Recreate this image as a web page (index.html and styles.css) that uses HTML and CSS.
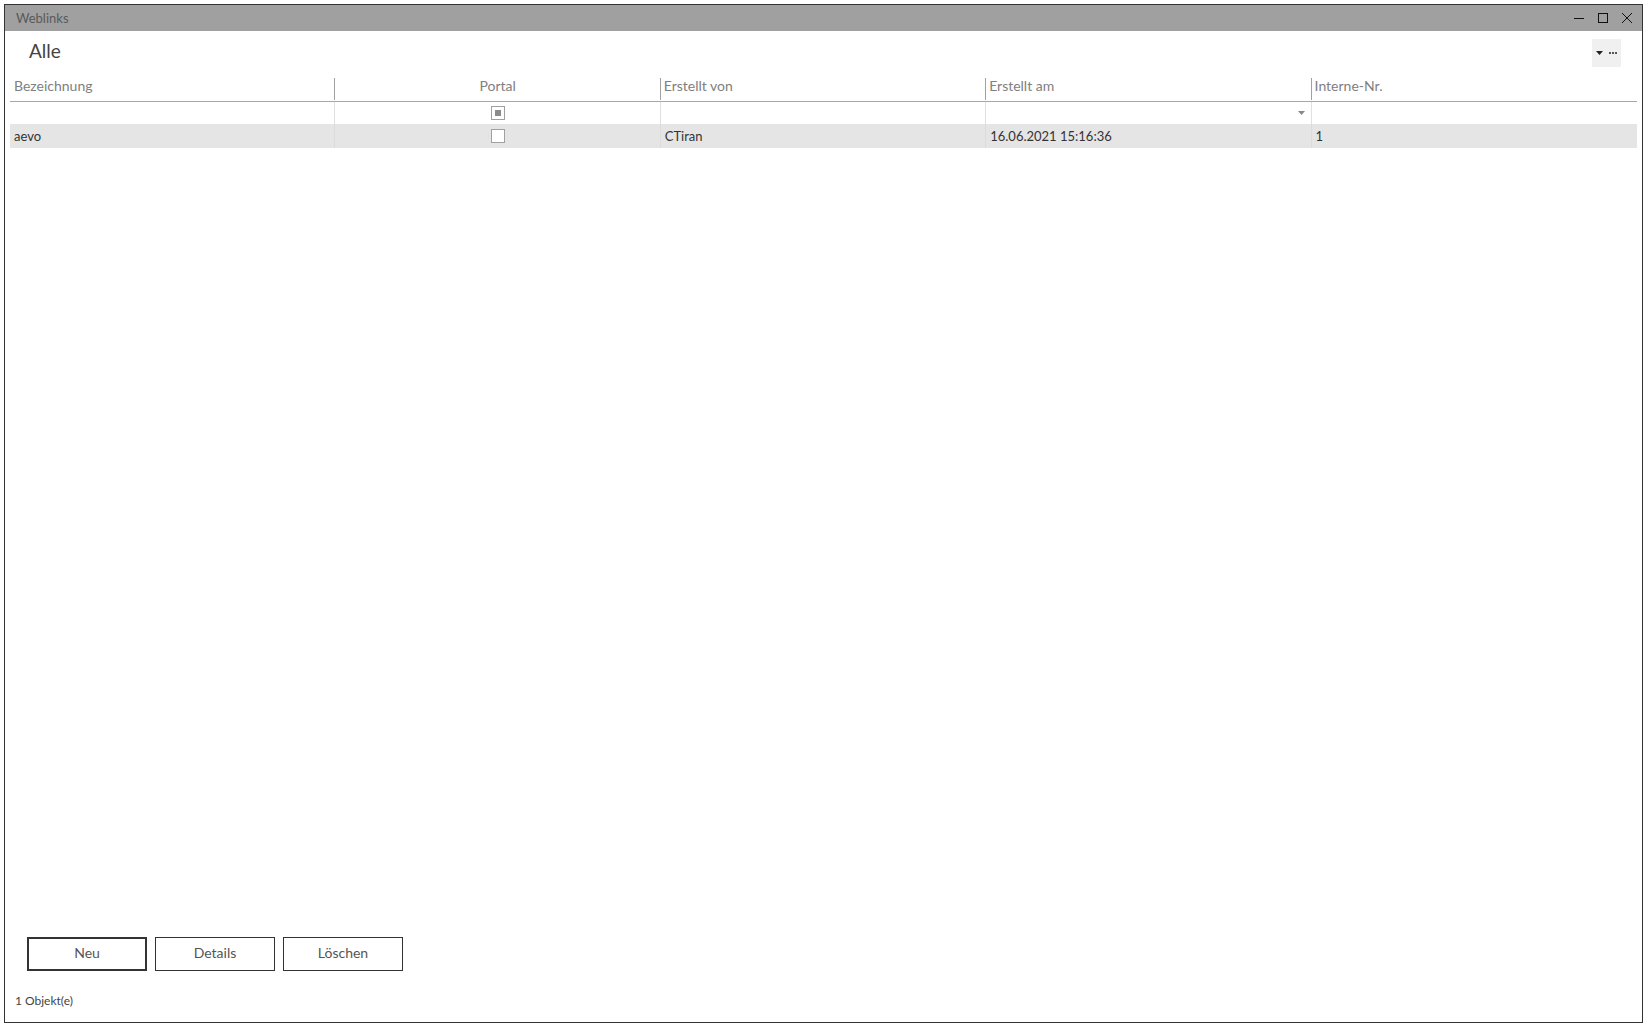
FILE: index.html
```html
<!DOCTYPE html>
<html lang="de">
<head>
<meta charset="utf-8">
<title>Weblinks</title>
<link rel="stylesheet" href="styles.css">
</head>
<body>
<div class="window">
  <div class="titlebar">
    <span class="title">Weblinks</span>
    <div class="controls">
      <svg class="ctl" width="10" height="10" viewBox="0 0 10 10"><path d="M0 5.5h10" stroke="#111" stroke-width="1"/></svg>
      <svg class="ctl" width="10" height="10" viewBox="0 0 10 10"><rect x="0.5" y="0.5" width="9" height="9" fill="none" stroke="#111" stroke-width="1"/></svg>
      <svg class="ctl" width="10" height="10" viewBox="0 0 10 10"><path d="M0 0L10 10M10 0L0 10" stroke="#111" stroke-width="1"/></svg>
    </div>
  </div>
  <div class="viewbar">
    <span class="viewname">Alle</span>
    <div class="viewtools">
      <svg width="7" height="4" viewBox="0 0 7 4"><path d="M0 0h7L3.5 4z" fill="#222"/></svg>
      <svg width="8" height="2" viewBox="0 0 8 2"><rect x="0" y="0" width="2" height="2" fill="#555"/><rect x="3" y="0" width="2" height="2" fill="#555"/><rect x="6" y="0" width="2" height="2" fill="#555"/></svg>
    </div>
  </div>
  <div class="grid">
    <div class="row head">
      <div class="cell sep">Bezeichnung</div>
      <div class="cell sep center">Portal</div>
      <div class="cell sep">Erstellt von</div>
      <div class="cell sep">Erstellt am</div>
      <div class="cell">Interne-Nr.</div>
    </div>
    <div class="row filter">
      <div class="cell sep"></div>
      <div class="cell sep center"><span class="cb ind"></span></div>
      <div class="cell sep"></div>
      <div class="cell sep right"><svg width="7" height="4" viewBox="0 0 7 4"><path d="M0 0h7L3.5 4z" fill="#888"/></svg></div>
      <div class="cell"></div>
    </div>
    <div class="row data">
      <div class="cell sep">aevo</div>
      <div class="cell sep center"><span class="cb"></span></div>
      <div class="cell sep">CTiran</div>
      <div class="cell sep">16.06.2021 15:16:36</div>
      <div class="cell">1</div>
    </div>
  </div>
  <div class="buttons">
    <button class="btn focus">Neu</button>
    <button class="btn">Details</button>
    <button class="btn">Löschen</button>
  </div>
  <div class="status">1 Objekt(e)</div>
</div>
</body>
</html>
```

FILE: styles.css
```css
* { box-sizing: border-box; }
html, body { margin: 0; padding: 0; background: #fff; }
body {
  font-family: Lato, "Noto Sans", sans-serif;
  color: #333;
  padding: 4px;
  height: 1027px;
}
.window {
  height: 1019px;
  width: 1639px;
  border: 1px solid #333;
  display: flex;
  flex-direction: column;
  background: #fff;
}
.titlebar {
  height: 26px;
  background: #a0a0a0;
  display: flex;
  align-items: center;
  padding-left: 11px;
  padding-right: 10px;
}
.title { font-size: 13px; color: #5a5a5a; flex: 1; margin-top: -1px; }
.controls { display: flex; gap: 14px; align-items: center; margin-top: -1px; }
.ctl { display: block; }
.viewbar {
  height: 41px;
  display: flex;
  align-items: center;
  justify-content: space-between;
  padding-left: 24px;
  padding-right: 21px;
}
.viewname { font-size: 19px; color: #444; margin-top: -2px; }
.viewtools {
  width: 29px;
  height: 28px;
  background: #f0f0f0;
  display: flex;
  align-items: center;
  justify-content: center;
  gap: 6px;
  margin-top: 2px;
}
.viewtools svg { display: block; }
.grid { flex: 1; padding: 0 5px; }
.row { display: grid; grid-template-columns: repeat(5, 1fr); }
.cell {
  display: flex;
  align-items: center;
  padding-left: 3px;
  white-space: nowrap;
}
.center { justify-content: center; padding-left: 0; }
.right { justify-content: flex-end; padding-right: 6px; }
.head { height: 30px; border-bottom: 1px solid #a8a8a8; align-items: center; }
.head .cell { font-size: 14px; color: #808080; height: 22px; margin-top: 4px; padding-bottom: 6px; }
.head .cell:first-child { padding-left: 4px; }
.head .cell.center { padding-left: 0; }
.head .sep { border-right: 1px solid #a0a0a0; }
.filter { height: 22px; }
.filter .sep { border-right: 1px solid #e0e0e0; }
.data { height: 24px; background: #e5e5e5; }
.data .cell { font-size: 13px; color: #333; padding-left: 4px; }
.data .cell.center { padding-left: 0; }
.data .sep { border-right: 1px solid #dcdcdc; }
.cb {
  width: 14px;
  height: 14px;
  border: 1px solid #a0a0a0;
  background: #fff;
  display: inline-flex;
  align-items: center;
  justify-content: center;
}
.cb.ind::after {
  content: "";
  width: 6px;
  height: 6px;
  background: #8a8a8a;
}
.buttons {
  display: flex;
  gap: 8px;
  padding-left: 22px;
  height: 34px;
  margin-top: -1px;
}
.btn {
  width: 120px;
  height: 34px;
  background: #fff;
  border: 1px solid #333;
  font-family: Lato, "Noto Sans", sans-serif;
  font-size: 14px;
  color: #555;
  padding: 0 0 4px 0;
}
.btn.focus { border: 2px solid #333; }
.status {
  font-size: 12px;
  color: #444;
  padding-left: 10px;
  height: 51px;
  padding-top: 22px;
}
```
